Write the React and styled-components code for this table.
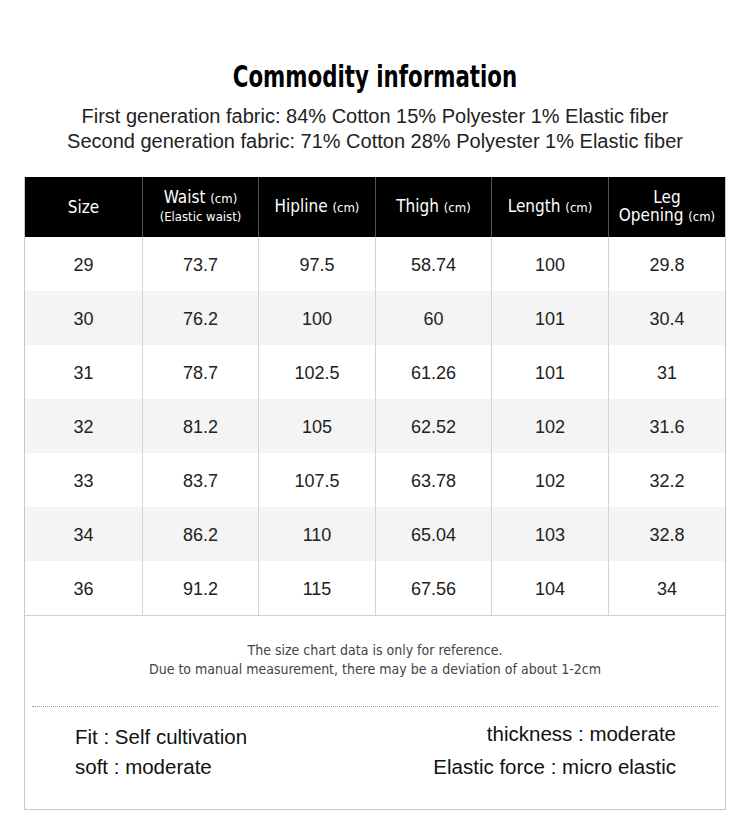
import React from 'react';
import styled, { createGlobalStyle } from 'styled-components';

const GlobalStyle = createGlobalStyle`
  html, body {
    margin: 0;
    padding: 0;
    background: #fff;
  }
  body {
    font-family: "Liberation Sans", Arial, sans-serif;
    color: #222;
  }
`;

const narrow = `"DejaVu Sans Condensed", "Liberation Sans", sans-serif`;

const Page = styled.div`
  width: 750px;
  height: 836px;
  box-sizing: border-box;
  padding-top: 59px;
  display: flex;
  flex-direction: column;
  align-items: center;
  overflow: hidden;
`;

const Title = styled.h1`
  margin: 0;
  font-family: ${narrow};
  font-weight: 700;
  font-size: 30px;
  line-height: 36px;
  color: #000;
  white-space: nowrap;
  transform: scaleX(0.79);
`;

const Fabric = styled.div`
  margin-top: 9px;
  font-size: 20px;
  line-height: 25px;
  color: #222;
  text-align: center;
  white-space: nowrap;
`;

const Sheet = styled.div`
  margin-top: 23px;
  width: 702px;
  box-sizing: border-box;
  border: 1px solid #c8c8c8;
  border-top: none;
`;

const Grid = styled.div`
  display: grid;
  grid-template-columns: 117px 116px 117px 116px 117px 1fr;
`;

const HeadCell = styled.div`
  height: 60px;
  background: #000;
  color: #fff;
  font-family: ${narrow};
  font-size: 17px;
  line-height: 18px;
  display: flex;
  flex-direction: column;
  align-items: center;
  justify-content: center;
  text-align: center;
  border-left: ${p => (p.first ? 'none' : '1px solid #555')};

  small {
    font-size: 13px;
  }
`;

const Cell = styled.div`
  height: 54px;
  padding-top: 2px;
  box-sizing: border-box;
  display: flex;
  align-items: center;
  justify-content: center;
  font-size: 18px;
  color: #222;
  background: ${p => (p.shaded ? '#f4f4f4' : '#fff')};
  border-left: ${p => (p.first ? 'none' : '1px solid #d4d4d4')};
`;

const Notes = styled.div`
  border-top: 1px solid #d0d0d0;
  padding-top: 25px;
  height: 65px;
  font-family: ${narrow};
  font-size: 14px;
  line-height: 19px;
  color: #444;
  text-align: center;
`;

const Divider = styled.div`
  margin: 0 7px;
  border-top: 1px dotted #999;
`;

const Specs = styled.div`
  display: grid;
  grid-template-columns: 1fr 1fr;
  row-gap: 6px;
  padding: 18px 49px 30px 50px;
  font-size: 20.5px;
  line-height: 24px;
  color: #111;
`;

const Spec = styled.div`
  text-align: ${p => (p.right ? 'right' : 'left')};
  margin-top: ${p => (p.raised ? '-3px' : '0')};
`;

const headers = [
  ['Size'],
  ['Waist', '(Elastic waist)'],
  ['Hipline'],
  ['Thigh'],
  ['Length'],
  ['Leg', 'Opening'],
];

const rows = [
  ['29', '73.7', '97.5', '58.74', '100', '29.8'],
  ['30', '76.2', '100', '60', '101', '30.4'],
  ['31', '78.7', '102.5', '61.26', '101', '31'],
  ['32', '81.2', '105', '62.52', '102', '31.6'],
  ['33', '83.7', '107.5', '63.78', '102', '32.2'],
  ['34', '86.2', '110', '65.04', '103', '32.8'],
  ['36', '91.2', '115', '67.56', '104', '34'],
];

function Header({ label, index }) {
  const [main, sub] = label;
  if (index === 0) return <HeadCell first>{main}</HeadCell>;
  if (index === 1) {
    return (
      <HeadCell>
        <span>
          {main} <small>(cm)</small>
        </span>
        <small>{sub}</small>
      </HeadCell>
    );
  }
  if (index === 5) {
    return (
      <HeadCell>
        <span>{main}</span>
        <span>
          {sub} <small>(cm)</small>
        </span>
      </HeadCell>
    );
  }
  return (
    <HeadCell>
      <span>
        {main} <small>(cm)</small>
      </span>
    </HeadCell>
  );
}

export default function App() {
  return (
    <Page>
      <GlobalStyle />
      <Title>Commodity information</Title>
      <Fabric>
        First generation fabric: 84% Cotton 15% Polyester 1% Elastic fiber
        <br />
        Second generation fabric: 71% Cotton 28% Polyester 1% Elastic fiber
      </Fabric>

      <Sheet>
        <Grid>
          {headers.map((h, i) => (
            <Header key={i} label={h} index={i} />
          ))}
          {rows.map((row, r) =>
            row.map((v, c) => (
              <Cell key={`${r}-${c}`} first={c === 0} shaded={r % 2 === 1}>
                {v}
              </Cell>
            ))
          )}
        </Grid>

        <Notes>
          The size chart data is only for reference.
          <br />
          Due to manual measurement, there may be a deviation of about 1-2cm
        </Notes>
        <Divider />
        <Specs>
          <Spec>Fit : Self cultivation</Spec>
          <Spec right raised>thickness : moderate</Spec>
          <Spec>soft : moderate</Spec>
          <Spec right>Elastic force : micro elastic</Spec>
        </Specs>
      </Sheet>
    </Page>
  );
}
